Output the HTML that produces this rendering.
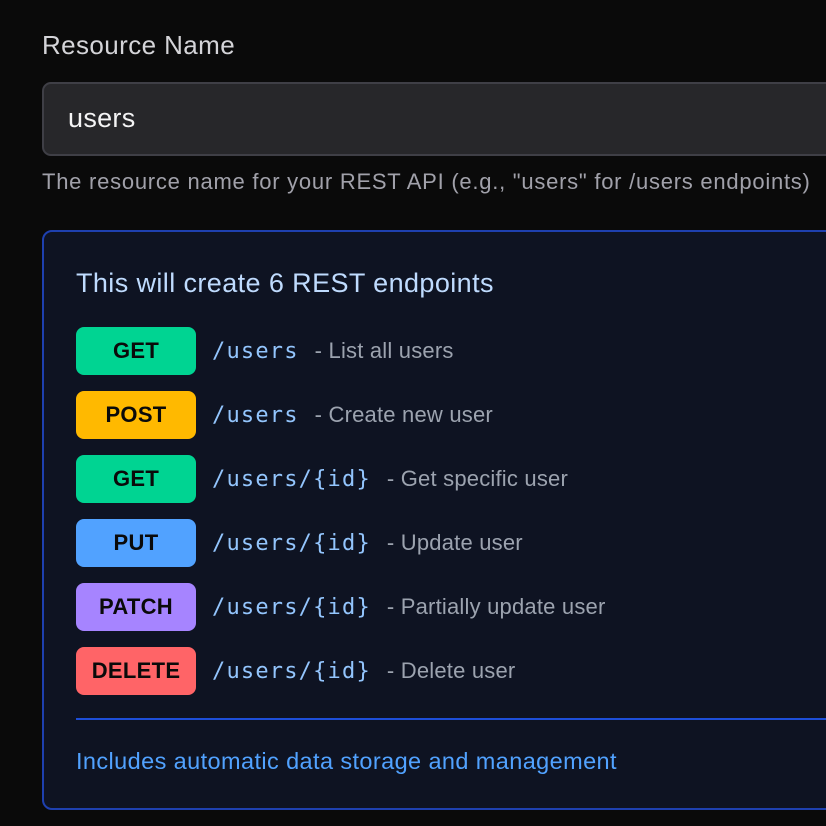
<!DOCTYPE html>
<html><head><style>
body{margin:0;width:826px;height:826px;background:#0a0a0a;overflow:hidden;font-family:"Liberation Sans",sans-serif;position:relative}
.a{position:absolute;white-space:nowrap}
.badge{position:absolute;left:76px;width:120px;height:48px;border-radius:8px;color:#0a0a0a;font-weight:bold;font-size:22px;display:flex;align-items:center;justify-content:center;letter-spacing:0.3px}
.p{position:absolute;left:212px;font-family:"DejaVu Sans Mono","Liberation Mono",monospace;font-size:22px;letter-spacing:1.2px;color:#93c5fd;white-space:nowrap}
.p span{font-family:"Liberation Sans",sans-serif;color:#9ca3af;font-size:22px;letter-spacing:0.2px;margin-left:16px}
</style></head><body>
<div class="a" style="left:42px;top:30px;font-size:26px;letter-spacing:0.4px;color:#d4d4d8">Resource Name</div>
<div class="a" style="left:42px;top:82px;width:800px;height:74px;background:#27272a;border:2px solid #3f3f46;border-radius:9px;box-sizing:border-box"></div>
<div class="a" style="left:68px;top:103px;font-size:27px;letter-spacing:0.3px;color:#f4f4f5">users</div>
<div class="a" style="left:42px;top:169px;font-size:22px;letter-spacing:0.75px;color:#a1a1aa">The resource name for your REST API (e.g., "users" for /users endpoints)</div>
<div class="a" style="left:42px;top:230px;width:820px;height:580px;background:#0e1322;border:2px solid #1e40af;border-radius:10px;box-sizing:border-box"></div>
<div class="a" style="left:76px;top:268px;font-size:27px;letter-spacing:0.4px;color:#bfdbfe">This will create 6 REST endpoints</div>
<div class="badge" style="top:327px;background:#00d492">GET</div>
<div class="p" style="top:338px">/users<span>- List all users</span></div>
<div class="badge" style="top:391px;background:#ffb900">POST</div>
<div class="p" style="top:402px">/users<span>- Create new user</span></div>
<div class="badge" style="top:455px;background:#00d492">GET</div>
<div class="p" style="top:466px">/users/{id}<span>- Get specific user</span></div>
<div class="badge" style="top:519px;background:#51a2ff">PUT</div>
<div class="p" style="top:530px">/users/{id}<span>- Update user</span></div>
<div class="badge" style="top:583px;background:#a684ff">PATCH</div>
<div class="p" style="top:594px">/users/{id}<span>- Partially update user</span></div>
<div class="badge" style="top:647px;background:#ff6467">DELETE</div>
<div class="p" style="top:658px">/users/{id}<span>- Delete user</span></div>
<div class="a" style="left:76px;top:718px;width:760px;height:2px;background:#1d4ed8"></div>
<div class="a" style="left:76px;top:748px;font-size:23.5px;letter-spacing:0.4px;color:#51a2ff">Includes automatic data storage and management</div>
</body></html>
